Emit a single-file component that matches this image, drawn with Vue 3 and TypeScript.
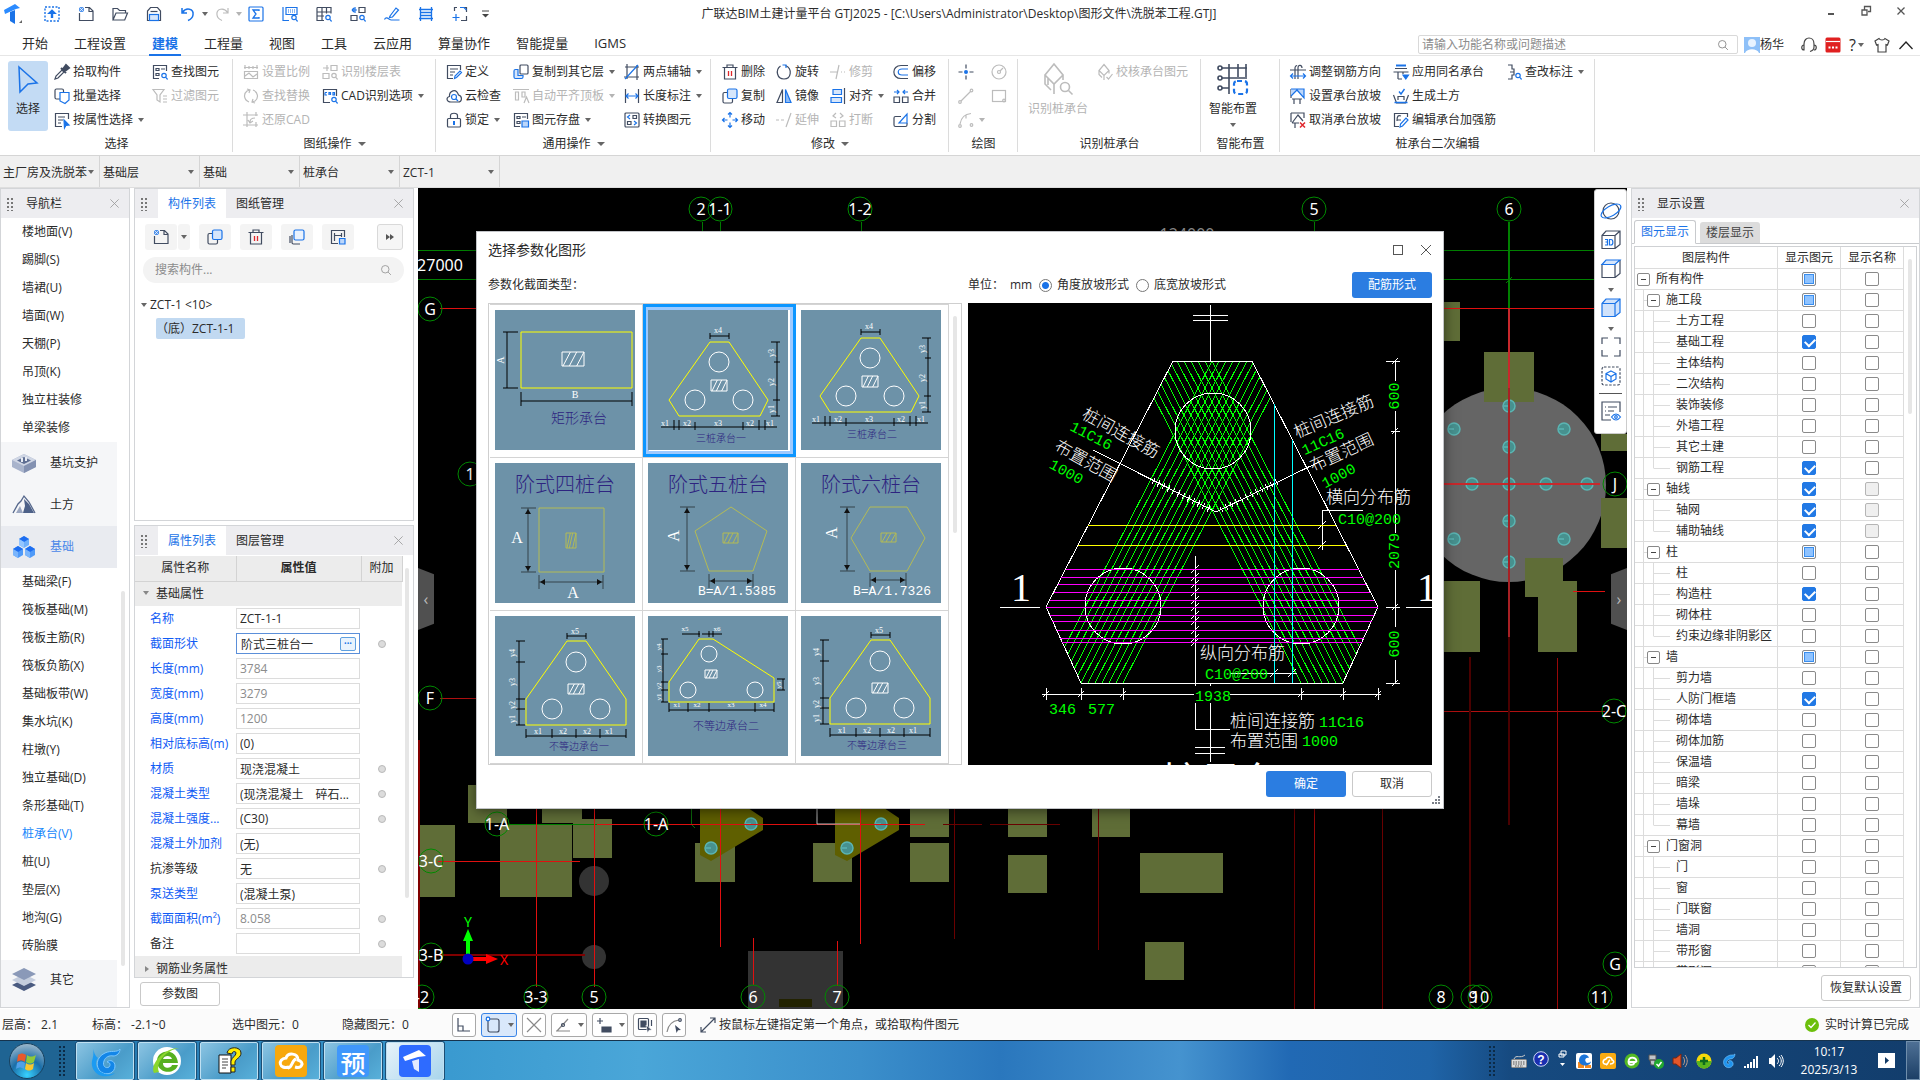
<script setup lang="ts">
import { ref } from 'vue'

const B = '#1a73e8'
const R = '#e0272c'

/* ---------- icon glyphs, 16 x 16 ---------- */
const lens = `<g stroke="${B}"><circle cx="12" cy="11.5" r="2.2"/><path d="M13.6 13.2l2 2.3"/></g>`
const grayLens = `<circle cx="12" cy="11.5" r="2.2"/><path d="M13.6 13.2l2 2.3"/>`
const icons: Record<string, string> = {
  target: `<g stroke="${B}"><rect x="1" y="1" width="14" height="14" stroke-dasharray="2 1.5" stroke-width="1.4"/><path d="M8 12V7" stroke-width="2.4"/><path d="M4.5 7.5L8 4l3.5 3.5z" fill="${B}"/></g>`,
  file: `<path d="M7 1.5h4.500l3.500 3.500v9.500H1.500V7M11 1.500V5.500h4"/><path d="M1 1h5v5H1z" fill="${B}" stroke="none" opacity=".75"/><path d="M1 1l5 5M6 1L1 6" stroke="#fff" stroke-width=".7"/>`,
  folder: `<path d="M1 14V2.500h4.500l2 2h6V7M1 14l3-7h11.500l-2.800 7z"/>`,
  save: `<path d="M1.500 14.500V5l3-3.500h7l3 3.500v9.500z"/><path d="M4.500 5.500h7"/><rect x="3.500" y="8.500" width="9" height="6" stroke="${B}" fill="#d6e6fb"/>`,
  undo: `<g stroke="${B}" stroke-width="1.500"><path d="M2 2v5h5M2.500 6.500C6 1 14 2.500 13 9c-.4 3-2.500 4.500-5 5.500"/></g>`,
  redo: `<path d="M14 2v5H9M13.500 6.500C10 1 2 2.500 3 9c.4 3 2.500 4.500 5 5.500"/>`,
  sum: `<g stroke="${B}"><rect x="1" y="1" width="14" height="14" rx="1"/><path d="M11 5V4H5l3 4-3 4h6v-1" stroke-width="1.300"/></g>`,
  sheetLens: `<g stroke="${B}"><path d="M1 1v13.500h6M4 1.500h11v7H4z"/><path d="M6 4h8M6 6h8" stroke-dasharray="1 1"/></g>${lens}`,
  gridLens: `<path d="M1 1.500h14v6M1 1.500v13h7M1 6h14M1 10h7M6 1.500v13M10.500 1.500v6"/>${lens}`,
  gridArrow: `<path d="M9 1.500h6v5H9zM1 9.500h6v5H1z"/><g stroke="${B}"><path d="M5 1v6M2 4h5M2 4l2-2M2 4l2 2"/></g>${lens}`,
  brush: `<g stroke="${B}"><path d="M6 10l6-8 2.500 2-6 7-3 .5z"/><path d="M0.500 13.500c2-4 5 1 7 .5h8"/></g>`,
  bars: `<g stroke="${B}" stroke-width="1.300"><path d="M2.500 1v14M13.500 1v14M1 3.500h14M2.500 6.500h11M2.500 9.500h11M1 12.500h14"/></g>`,
  scan: `<path d="M5 1.500H2.500V5M10 1.500h4.500V6M14.500 10v4.500H9"/><g stroke="${B}"><path d="M4 8v7M0.500 11.500h7M8 1.500h4l2.500 2.500"/></g>`,
  pick: `<path d="M1 15l1-3 6-6 2 2-6 6z"/><path d="M7 4l5 5M9 5l3-4 3 3-4 3z" fill="#414c61" stroke-width="2"/>`,
  batch: `<rect x="1" y="1" width="8.500" height="10" rx="1.500"/><path d="M6 4.500h9V12l-4 3.500L6 13z" stroke="${B}" fill="#fff"/>`,
  byAttr: `<path d="M14.500 7V1.500h-13v13H8M4 5h7M4 8h5M4 11h3"/><path d="M10 8l5 5-3 .3L10.500 16z" fill="${B}" stroke="${B}"/>`,
  find: `<path d="M14.500 7V1.500h-13v13H7M4 4.500h3v2H4zM4 9.500h3v2H4zM9 5h4"/>${lens}`,
  funnel: `<path d="M1 1.500h11L8 7v7l-3-2V7zM11 8h4M11 11h4M11 14h4"/>`,
  scale: `<path d="M1 3.500h14M2 1v4M14 1v4M6 2v3M10 2v3M1.500 7.500h13v7h-13zM2 12l4-3 4 4 4-3"/>`,
  layers: `<path d="M5 1v6M1 4h6M9 1.500h6v5H9zM1 9.500h6v5H1z"/>${grayLens}`,
  swap: `<path d="M6 14C1 12 0 6 4 3l3-1M4 1l3 1-1 3M10 2c5 2 6 8 2 11l-3 1M12 15l-3-1 1-3"/>`,
  restore: `<path d="M4 0v15M0 3h15M0 13h15M13 0v4M13 10v5M12 6c-3 0-5 1-5 4M5 8l2 3 3-2"/>`,
  cad: `<path d="M14.500 8V1.500h-13v13H8"/><path d="M3 4.500h2M3 4.500v2.500h2M7 7V4.500h1.500V7M7 6h1.500M11 4.500v2.500h1.500V4.500z" stroke="${B}"/>${lens}`,
  define: `<path d="M14.500 6V1.500h-13v13H7M4 5h8M4 8h5M4 11h3"/><path d="M8.500 14.500l.5-2.500 5-5 1.500 1.500-5 5z" stroke="${B}"/>`,
  cloud: `<path d="M5 14C0 14 0 9 3.500 8.500 3 3 10-0.500 12.500 7c4 1 4 7-.5 7z"/><g stroke="${B}"><circle cx="8" cy="9" r="2.500"/><path d="M10 11l2 2"/></g>`,
  lock: `<rect x="1.500" y="6.500" width="13" height="8.500" rx="1"/><path d="M4.500 6V3.500c0-3 7-3 7 0V6"/><path d="M8 9v4" stroke="${B}" stroke-width="2"/>`,
  copyTo: `<rect x="7" y="1" width="8" height="9" rx="1"/><path d="M5 5.500H2.500c-1 0-1.500.5-1.500 1.500V13c0 1 .5 1.500 1.500 1.500h6c1 0 1.500-.5 1.500-1.500v-1.500H5z" stroke="${B}" fill="#d6e6fb"/>`,
  align2: `<path d="M0 1.500h16M2.500 4v8h3V4zM9 4v5h3V4zM11 15l2.500-6L16 15"/>`,
  disk: `<path d="M14.500 7V1.500h-13v13H7M4 4.500h3v2H4zM4 9.500h3v2H4zM9 5h4"/><path d="M9 9h6.500v6H9z" fill="#bcd6fa" stroke="${B}"/>`,
  twoPt: `<path d="M3 0v15M0 13h15M13 1v15M1 3h14"/><path d="M1 15L14 1" stroke="${B}"/>`,
  length: `<path d="M1.500 1v14M14.500 1v14"/><path d="M2 8h12M4.500 5.500L2 8l2.500 2.500M11.500 5.500L14 8l-2.500 2.500" stroke="${B}"/>`,
  convert: `<rect x="1" y="1" width="14" height="14" rx="1"/><path d="M9 3.500h3.500v3H9zM3.500 9.500H7v3H3.500z"/><path d="M6 3L3.500 5 6 7M10 13l2.500-2L10 9" stroke="${B}"/>`,
  del: `<path d="M0.500 3.500h15M5 3V1h6v2M2.500 4v11h11V4"/><path d="M6.500 7v5M9.500 7v5" stroke="${R}" stroke-width="1.300"/>`,
  copy: `<path d="M6 4.500H2.500c-1 0-1.500.5-1.500 1.500v7.500c0 1 .5 1.500 1.500 1.500h6.500c1 0 1.500-.5 1.500-1.500V11"/><rect x="5.500" y="1" width="9.500" height="9.500" rx="1.500" stroke="${B}" fill="#d6e6fb"/>`,
  move: `<g stroke="${B}"><path d="M8 0.500v5M8 10.500v5M0.500 8h5M10.500 8h5M6 2.500l2-2 2 2M6 13.500l2 2 2-2M2.500 6l-2 2 2 2M13.500 6l2 2-2 2"/></g>`,
  rotate: `<path d="M4.500 2C-1 6 1 15 8 15S17 5 9.500 1.500"/><path d="M10 4V1H6.500" stroke="${B}"/>`,
  mirror: `<path d="M6.500 1.500v13H1z"/><path d="M9.500 1.500v13H15z" fill="#8fbcf5" stroke="${B}"/>`,
  extend: `<path d="M0 8h3M5 8h3M15 1l-5 14"/>`,
  trim: `<path d="M0 8h7M9 1L6 15M11 8h1M14 8h1"/>`,
  align: `<path d="M14.500 0v16"/><path d="M3 1.500h8.500v5H3zM1 9.500h10.500v5H1z" stroke="${B}" fill="#d6e6fb"/>`,
  breakUp: `<path d="M1 9h5.500v5.500H1zM9.500 9H15v5.500H9.500zM6 1L3 4l3 2M10 1l3 3-3 2"/>`,
  offset: `<path d="M15 1.500H8C-1.500 1.500-1.500 14.500 8 14.500h7"/><path d="M15 5H9c-5 0-5 6 0 6h6" stroke="${B}"/>`,
  merge: `<path d="M1 9h5.500v5.500H1zM9.500 9H15v5.500H9.500z"/><path d="M1 4h5M4 2l2 2-2 2M15 4h-5M12 2l-2 2 2 2" stroke="${B}"/>`,
  split: `<path d="M8 4.500H2.500C1.500 4.500 1 5 1 6v7c0 1 .5 1.500 1.500 1.500h10c1 0 1.500-.5 1.500-1.500v-2"/><path d="M6 11l8-9v9z" stroke="${B}"/>`,
  point: `<path d="M8 0.500v4M8 11.500v4M0.500 8h4M11.500 8h4"/><circle cx="8" cy="8" r="2" fill="${B}" stroke="none"/>`,
  circle: `<circle cx="8" cy="8" r="7"/><circle cx="8" cy="8" r="1.500"/><path d="M9 7l3-3"/>`,
  line: `<circle cx="13.500" cy="2.500" r="1.300"/><circle cx="2" cy="14" r="1.300"/><path d="M3 13l9.500-9.500"/>`,
  rect: `<rect x="1.500" y="2.500" width="13" height="11"/><circle cx="13" cy="12.500" r="1.300"/>`,
  arc: `<circle cx="2" cy="14" r="1.300"/><circle cx="13.500" cy="13" r="1.300"/><path d="M2 12C3 6 7 2 13 1.500M8 3.500v3"/>`,
  check: `<path d="M7 0.500l5 6-5 5-5-5zM2 6.500v4l3 3M7 11.500V16M9.500 13l2 2 4-5M12 6.500v3"/>`,
  cap: `<path d="M12 1l9 11-9 9-9-9zM3 12v9l6 6M12 21v10M3 12V20M21 12v5M12 31M6 15v7" /><circle cx="23" cy="24" r="4.500"/><path d="M26.500 27.500l4 4"/>`,
  smart: `<path d="M4 5h26M4 15h26M4 25h8M12 1v30M21 1v13M29 1v13" stroke-width="1.600"/><g fill="#fff"><circle cx="3" cy="5" r="2"/><circle cx="3" cy="15" r="2"/><circle cx="3" cy="25" r="2"/></g><rect x="17" y="18" width="13" height="13" rx="3" stroke="${B}" stroke-dasharray="5 3" stroke-width="2.200"/>`,
  dir: `<path d="M0 6h16M8 15V4c0-4 4-3 4 0M5 15V4c0-1 1-3 2-2"/><path d="M1 12h14M3 9.500L.5 12 3 14.500M13 9.500l2.500 2.500-2.500 2.500" stroke="${B}"/>`,
  slope: `<path d="M2 11h10M4 11v5M10 11v5M1 1v9"/><path d="M1 1h13v9L7 2 1 8" stroke="${B}" fill="#bcd6fa"/>`,
  unslope: `<path d="M1 1h13v5M2 11L8 3l5 6M2 11h7M5 11v5M1 1v9"/><path d="M10 10.500l5 5M15 10.500l-5 5" stroke="${R}" stroke-width="1.500"/>`,
  apply: `<path d="M2 4.500h12M0.500 8h15M5 8v7M10 8v2M5 15h4"/><path d="M3 1.500h10" stroke="${B}" stroke-width="2"/><path d="M10 11h5.500l-2.700 4z" fill="${B}" stroke="${B}"/>`,
  earth: `<path d="M0.500 7l3 8h9l3-8M5 12V8.500h6V12"/><path d="M1.500 14.500h13M6 3.500L8 6l3.500-5" stroke="${B}" stroke-width="1.400"/>`,
  editBar: `<path d="M14.500 5V1.500H1.500v13H6M8 4c-3-1-4 0-4 5M4 8l4 0"/><path d="M7 15l.5-3L13 6l2 2-5.500 6z" stroke="${B}"/>`,
  note: `<path d="M2 1h4v4h2v6H6v4H2M4 8h4"/>${lens}`,
  multi: `<path d="M3 6v7.500c0 .8.500 1.500 1.500 1.500H11M1 7v7"/><rect x="5" y="1" width="10" height="10" rx="1.500" stroke="${B}" fill="#eaf2fd"/>`,
  sheetSave: `<path d="M14.500 8V1.500h-13v13H8M4.500 4v8M11.500 4v4M4.500 6.500h7"/><path d="M9.500 9.500H15V15H9.500z" fill="#bcd6fa" stroke="${B}"/>`,
  search: `<circle cx="7" cy="7" r="5"/><path d="M10.800 10.800L14.500 14.500"/>`,
  x: `<path d="M2 2l12 12M14 2L2 14"/>`,
}

interface Tool { i: string; t?: string; a?: boolean; d?: boolean }
interface Col { w: number; items: Tool[] }
interface Group { w: number; pad: number; label: string; la?: boolean; big?: { i: string; t: string; w: number; on?: boolean; d?: boolean; a?: boolean }; cols: Col[] }
const groups: Group[] = [
  { w: 233, pad: 8, label: '选择', big: { i: 'cursor', t: '选择', w: 46, on: true }, cols: [
    { w: 98, items: [{ i: 'pick', t: '拾取构件' }, { i: 'batch', t: '批量选择' }, { i: 'byAttr', t: '按属性选择', a: true }] },
    { w: 80, items: [{ i: 'find', t: '查找图元' }, { i: 'funnel', t: '过滤图元', d: true }] }] },
  { w: 203, pad: 10, label: '图纸操作', la: true, cols: [
    { w: 79, items: [{ i: 'scale', t: '设置比例', d: true }, { i: 'swap', t: '查找替换', d: true }, { i: 'restore', t: '还原CAD', d: true }] },
    { w: 110, items: [{ i: 'layers', t: '识别楼层表', d: true }, { i: 'cad', t: 'CAD识别选项', a: true }] }] },
  { w: 275, pad: 10, label: '通用操作', la: true, cols: [
    { w: 67, items: [{ i: 'define', t: '定义' }, { i: 'cloud', t: '云检查' }, { i: 'lock', t: '锁定', a: true }] },
    { w: 111, items: [{ i: 'copyTo', t: '复制到其它层', a: true }, { i: 'align2', t: '自动平齐顶板', a: true, d: true }, { i: 'disk', t: '图元存盘', a: true }] },
    { w: 84, items: [{ i: 'twoPt', t: '两点辅轴', a: true }, { i: 'length', t: '长度标注', a: true }, { i: 'convert', t: '转换图元' }] }] },
  { w: 238, pad: 11, label: '修改', la: true, cols: [
    { w: 54, items: [{ i: 'del', t: '删除' }, { i: 'copy', t: '复制' }, { i: 'move', t: '移动' }] },
    { w: 54, items: [{ i: 'rotate', t: '旋转' }, { i: 'mirror', t: '镜像' }, { i: 'extend', t: '延伸', d: true }] },
    { w: 63, items: [{ i: 'trim', t: '修剪', d: true }, { i: 'align', t: '对齐', a: true }, { i: 'breakUp', t: '打断', d: true }] },
    { w: 50, items: [{ i: 'offset', t: '偏移' }, { i: 'merge', t: '合并' }, { i: 'split', t: '分割' }] }] },
  { w: 69, pad: 9, label: '绘图', cols: [
    { w: 33, items: [{ i: 'point' }, { i: 'line', d: true }, { i: 'arc', a: true, d: true }] },
    { w: 20, items: [{ i: 'circle', d: true }, { i: 'rect', d: true }] }] },
  { w: 183, pad: 10, label: '识别桩承台', big: { i: 'cap', t: '识别桩承台', w: 69, d: true }, cols: [
    { w: 95, items: [{ i: 'check', t: '校核承台图元', d: true }] }] },
  { w: 79, pad: 8, label: '智能布置', big: { i: 'smart', t: '智能布置', w: 48, a: true }, cols: [] },
  { w: 315, pad: 10, label: '桩承台二次编辑', cols: [
    { w: 103, items: [{ i: 'dir', t: '调整钢筋方向' }, { i: 'slope', t: '设置承台放坡' }, { i: 'unslope', t: '取消承台放坡' }] },
    { w: 113, items: [{ i: 'apply', t: '应用同名承台' }, { i: 'earth', t: '生成土方' }, { i: 'editBar', t: '编辑承台加强筋' }] },
    { w: 80, items: [{ i: 'note', t: '查改标注', a: true }] }] },
]

const quick = ['target', 'file', 'folder', 'save', 'undo', 'redo', 'sum', 'sheetLens', 'gridLens', 'gridArrow', 'brush', 'bars', 'scan']
const tabs = ['开始', '工程设置', '建模', '工程量', '视图', '工具', '云应用', '算量协作', '智能提量', 'IGMS']
const crumbs = ['主厂房及洗脱苯', '基础层', '基础', '桩承台', 'ZCT-1']

const navTop = ['楼地面(V)', '踢脚(S)', '墙裙(U)', '墙面(W)', '天棚(P)', '吊顶(K)', '独立柱装修', '单梁装修']
const navBase = ['基础梁(F)', '筏板基础(M)', '筏板主筋(R)', '筏板负筋(X)', '基础板带(W)', '集水坑(K)', '柱墩(Y)', '独立基础(D)', '条形基础(T)', '桩承台(V)', '桩(U)', '垫层(X)', '地沟(G)', '砖胎膜']
const pit = `<path d="M12 3l12 6v7l-12 6L0 16V9z" fill="#a9b4cc"/><path d="M12 3l12 6-12 6L0 9z" fill="#cfd6e4"/><path d="M12 6l7 3.500-7 3.500-7-3.500z" fill="#5f6f93"/><path d="M9 7h2v4H9zM13 6h2v4h-2z" fill="#e8ecf4"/><path d="M12 15l12-6v7l-12 6z" fill="#8391b1"/>`
const hill = `<path d="M1 20L6 11l3-3 3-5 5 6 6 11" fill="none" stroke="#55678c" stroke-width="1.300"/><path d="M12 6l5 5 5 9H11l2-7z" fill="#4d6188"/><path d="M4 20l4-7 3 7z" fill="#9aa6c0"/>`
const cube = (x: number, y: number, side: string, front: string) =>
  `<g transform="translate(${x} ${y})"><path d="M12 1l5 3v6l-5 3-5-3V4z" fill="${side}"/><path d="M12 1l5 3-5 3-5-3z" fill="#1d6df0"/><path d="M7 4l5 3v6l-5-3z" fill="${front}"/></g>`
const cubes = cube(0, 0, '#6fb0fb', '#93c5ff') + cube(-6, 10, '#4f9af8', '#7ab5fc') + cube(6, 10, '#4f9af8', '#7ab5fc')
const stack = `<path d="M12 11l12 6-12 6-12-6z" fill="#4a5b80"/><path d="M12 6l12 6-12 6-12-6z" fill="#c4cddd"/><path d="M12 0l12 6-12 6L0 6z" fill="#8a99b8"/>`
const cats = [{ t: '基坑支护', g: pit, on: false }, { t: '土方', g: hill, on: false }, { t: '基础', g: cubes, on: true }]

interface Prop { n: string; v: string; dot?: boolean; k?: boolean; ro?: boolean; edit?: boolean }
const props: Prop[] = [
  { n: '名称', v: 'ZCT-1-1' },
  { n: '截面形状', v: '阶式三桩台一', dot: true, edit: true },
  { n: '长度(mm)', v: '3784', ro: true },
  { n: '宽度(mm)', v: '3279', ro: true },
  { n: '高度(mm)', v: '1200', ro: true },
  { n: '相对底标高(m)', v: '(0)' },
  { n: '材质', v: '现浇混凝土', dot: true },
  { n: '混凝土类型', v: '(现浇混凝土　碎石...', dot: true },
  { n: '混凝土强度...', v: '(C30)', dot: true },
  { n: '混凝土外加剂', v: '(无)' },
  { n: '抗渗等级', v: '无', dot: true, k: true },
  { n: '泵送类型', v: '(混凝土泵)' },
  { n: '截面面积(m²)', v: '8.058', dot: true, ro: true },
  { n: '备注', v: '', dot: true, k: true },
]

/* level, name, state of "显示图元" (0 off, 1 on, 2 mixed), names disabled, last child */
type Row = [number, string, number, boolean?, boolean?]
const rows: Row[] = [
  [0, '所有构件', 2], [1, '施工段', 2], [2, '土方工程', 0], [2, '基础工程', 1], [2, '主体结构', 0], [2, '二次结构', 0],
  [2, '装饰装修', 0], [2, '外墙工程', 0], [2, '其它土建', 0], [2, '钢筋工程', 1, false, true],
  [1, '轴线', 1, true], [2, '轴网', 1, true], [2, '辅助轴线', 1, true, true],
  [1, '柱', 2], [2, '柱', 0], [2, '构造柱', 1], [2, '砌体柱', 0], [2, '约束边缘非阴影区', 0, false, true],
  [1, '墙', 2], [2, '剪力墙', 0], [2, '人防门框墙', 1], [2, '砌体墙', 0], [2, '砌体加筋', 0], [2, '保温墙', 0], [2, '暗梁', 0], [2, '墙垛', 0], [2, '幕墙', 0, false, true],
  [1, '门窗洞', 0], [2, '门', 0], [2, '窗', 0], [2, '门联窗', 0], [2, '墙洞', 0], [2, '带形窗', 0], [2, '带形洞', 0],
]

/* ---------- section thumbnails, 140 x 140 ---------- */
const L = (d: string, c = '#000', w = 1) => `<path d="${d}" fill="none" stroke="${c}" stroke-width="${w}"/>`
const C = (x: number, y: number, r: number) => `<circle cx="${x}" cy="${y}" r="${r}" fill="none" stroke="#fff"/>`
const hatch = (x: number, y: number, w: number, h: number, c = '#fff') =>
  L(`M${x} ${y}h${w}v${h}h${-w}z M${x + 1} ${y + h}l${w / 3} ${-h} M${x + w / 3} ${y + h}l${w / 3} ${-h} M${x + (2 * w) / 3} ${y + h}l${w / 3} ${-h}`, c)
const T = (s: string, x: number, y: number, size = 8, rot = 0, fam = 'Liberation Serif', c = '#fff') =>
  `<text x="${x}" y="${y}" font-size="${size}" fill="${c}" text-anchor="middle" dominant-baseline="central" font-family="'${fam}','Noto Sans CJK SC',serif"${rot ? ` transform="rotate(${rot} ${x} ${y})"` : ''}>${s}</text>`
const purple = '#2e2480'
const olive = '#b4bb55'
const gray = '#35434b'
const title = (s: string, x: number, y: number, size: number) => `<g font-weight="300">${T(s, x, y, size, 0, 'Liberation Serif', purple)}</g>`
const tri = (dy: number) =>
  L('M62 32H81L120 90L112 106H31L21 90Z', '#ff0') + C(71, 52, 10) + C(47, 90, 10) + C(95, 90, 10) + hatch(63, 70, 16, 11) +
  L(`M62 26H81M62 23v6M81 23v6M129 32V106M123 32h9M126 52h6M125 90h7M123 106h9M13 ${117 + dy}H129M26 ${110 + dy}v10M31 ${110 + dy}v10M47 ${112 + dy}v8M95 ${112 + dy}v8M111 ${110 + dy}v10M117 ${110 + dy}v10`) +
  T('x4', 70, 20) + T('y3', 123, 43, 8, -90) + T('y2', 123, 72, 8, -90) + T('y1', 123, 99, 8, -90) +
  T('x1', 17, 113 + dy) + T('x2', 39, 113 + dy) + T('x3', 70, 113 + dy) + T('x2', 102, 113 + dy) + T('x1', 122, 113 + dy)
const uneven =
  L('M72 25H91L131 83V109H31V83Z', '#ff0') + C(81, 46, 10) + C(57, 93, 10) + C(105, 93, 10) + hatch(73, 68, 16, 10) +
  L('M72 20H91M72 17v6M91 17v6M24 25V109M21 25h9M21 46h9M21 83h9M21 93h9M21 109h9M31 120H131M31 113v9M57 113v9M81 113v9M105 113v9M131 113v9') +
  T('x5', 80, 15) + T('y4', 17, 37, 8, -90) + T('y3', 17, 66, 8, -90) + T('y2', 17, 89, 8, -90) + T('y1', 17, 103, 8, -90) +
  T('x1', 43, 115) + T('x2', 68, 115) + T('x2', 92, 115) + T('x1', 114, 115)
const vArrow = (x: number, y1: number, y2: number) =>
  L(`M${x} ${y1}V${y2}M${x - 7} ${y1}h15M${x - 7} ${y2}h15`, gray) + `<path d="M${x} ${y1 + 1}l3 5h-6zM${x} ${y2 - 1}l3-5h-6z" fill="#111"/>`
const hArrow = (x1: number, x2: number, y: number) =>
  L(`M${x1} ${y}H${x2}M${x1} ${y - 7}v14M${x2} ${y - 7}v14`, gray) + `<path d="M${x1 + 1} ${y}l5-3v6zM${x2 - 1} ${y}l-5-3v6z" fill="#111"/>`
const thumbs = [
  L('M26 22H137V78H26Z', '#ff0') + hatch(67, 42, 22, 14) + L('M12 22V78M8 22h15M8 78h15M26 91H137M26 82v14M137 82v14') +
    T('A', 5, 50, 10, -90) + T('B', 80, 84, 10) + title('矩形承台', 84, 108, 14),
  tri(0) + title('三桩承台一', 73, 128, 10),
  `<g transform="translate(-2 -4)">${tri(0)}</g>` + title('三桩承台二', 71, 124, 10),
  title('阶式四桩台', 70, 22, 20) + L('M44 45H109V109H44Z', olive) + vArrow(33, 45, 109) + hArrow(44, 108, 119) + hatch(71, 70, 10, 15, olive) + T('A', 22, 74, 16) + T('A', 78, 129, 16),
  title('阶式五桩台', 70, 22, 20) + L('M83 44L119 68L105 108H61L47 68Z', olive) + vArrow(39, 44, 108) + hArrow(61, 105, 118) + hatch(75, 70, 15, 10, olive) + T('A', 25, 73, 16, -90) + T('B=A/1.5385', 89, 128, 13, 0, 'Liberation Mono'),
  title('阶式六桩台', 70, 22, 20) + L('M69 44H106L124 75L106 108H69L50 75Z', olive) + vArrow(46, 44, 108) + hArrow(69, 105, 117) + hatch(80, 70, 15, 9, olive) + T('A', 30, 70, 16, -90) + T('B=A/1.7326', 91, 128, 13, 0, 'Liberation Mono'),
  uneven + title('不等边承台一', 84, 130, 10),
  L('M51 23H65L126 62V86H21V66Z', '#ff0') + C(61, 38, 8) + C(40, 74, 8) + C(107, 74, 8) + hatch(57, 54, 12, 8) +
    L('M34 18H52M54 18H74M51 15v6M61 15v6M65 15v6M15 23V86M13 23h7M13 38h7M13 66h7M13 74h7M13 86h7M135 63V74M129 63h8M129 74h8M21 94H126M21 87v9M40 87v9M61 87v9M107 87v9M126 87v9') +
    T('x5', 37, 13, 7) + T('x6', 69, 13, 7) + T('y4', 11, 31, 7, -90) + T('y3', 11, 53, 7, -90) + T('y2', 11, 70, 7, -90) + T('y1', 11, 81, 7, -90) + T('y5', 131, 69, 7, -90) +
    T('x1', 29, 89, 7) + T('x2', 49, 89, 7) + T('x3', 83, 89, 7) + T('x4', 115, 89, 7) + title('不等边承台二', 78, 110, 11),
  `<g transform="translate(-2 -1)">${uneven}</g>` + title('不等边承台三', 76, 129, 10),
]
const chosen = ref(1)
const slopeMode = ref('angle')

/* ---------- reinforcement preview ---------- */
const barOffsets = Array.from({ length: 12 }, (_, i) => 244 + i * 7)
const magentaY = [266, 274, 281, 289, 297, 304, 312, 318, 327, 335, 339]
const leftX = (y: number) => (y < 304 ? 78 + ((304 - y) * 127) / 246 : 78 + ((y - 304) * 35) / 76)
const rightX = (y: number) => (y < 304 ? 410 - ((304 - y) * 126) / 246 : 410 - ((y - 304) * 35) / 76)
const ticks = Array.from({ length: 12 }, (_, i) => i)

/* ---------- model view ---------- */
const slabs = [
  [418, 825, 37, 72], [468, 785, 39, 38], [542, 800, 40, 23], [573, 819, 39, 39], [500, 825, 72, 72], [695, 843, 40, 39], [813, 843, 39, 39],
  [910, 800, 39, 37], [910, 843, 39, 39], [1008, 800, 39, 37], [1008, 855, 39, 38], [1092, 800, 38, 37], [1140, 853, 83, 40], [1145, 942, 39, 38],
  [1440, 302, 20, 39], [1601, 434, 26, 17], [1601, 498, 26, 50], [1440, 581, 40, 71],
]
const piles = [[1509, 406], [1454, 429], [1564, 429], [1509, 447], [1472, 484], [1509, 484], [1546, 484], [1587, 484], [1509, 521], [1454, 539], [1564, 539], [1509, 562], [751, 824], [711, 848], [881, 824], [847, 848]]
type Axis = [string, number, number]
const axes: Axis[] = [
  ['2', 701, 209], ['1-1', 720, 209], ['1-2', 860, 209], ['5', 1314, 209], ['6', 1509, 209], ['G', 430, 309], ['F', 430, 698], ['1', 470, 474],
  ['J', 1615, 484], ['2-C', 1614, 711], ['G', 1615, 964], ['8', 1441, 997], ['9', 1473, 997], ['10', 1480, 997], ['11', 1600, 997],
  ['1-A', 497, 824], ['1-A', 656, 824], ['3-C', 431, 861], ['3-B', 431, 955], ['-2', 422, 997], ['3-3', 536, 997], ['5', 594, 997], ['6', 753, 997], ['7', 837, 997],
]

const snap = [
  { w: 24, g: `<path d="M2 1v13h12M2 9h5v5"/>` },
  { w: 36, g: `<rect x="3" y="2" width="11" height="13" rx="2"/><circle cx="3" cy="2" r="1.800" stroke="${B}" fill="#fff"/>`, on: true, a: true },
  { w: 24, g: `<path d="M1 1l14 14M15 1L1 15" stroke="#888"/>` },
  { w: 36, g: `<path d="M1 14h14M2 14L13 2" stroke="#888"/><circle cx="8" cy="8" r="1.500"/>`, a: true },
  { w: 36, g: `<path d="M4 1v6M1 4h6"/><path d="M6 10h9v5H6z" fill="#414c61"/>`, a: true },
  { w: 24, g: `<rect x="1.500" y="1.500" width="10" height="11" rx="1"/><path d="M4 4h5v6H4z" fill="#414c61"/><path d="M14.500 3v6"/><path d="M9 8l6 5-3 .3L10.500 16z" fill="#414c61" stroke="#fff" stroke-width=".6"/>` },
  { w: 24, g: `<path d="M1 15C2 8 6 4 13 3" stroke="#888"/><circle cx="14" cy="3" r="1.300"/><path d="M9 8l6 5-3 .3L10.500 16z" fill="#414c61" stroke="none"/>` },
]
const viewTools = [
  { g: `<circle cx="10" cy="10" r="8"/><ellipse cx="10" cy="10" rx="11" ry="5" transform="rotate(-30 10 10)" stroke="${B}"/>` },
  { g: `<path d="M1 5.500h13v13H1zM1 5.500l4-4.500h14v13.500l-5 4M14 5.500L19 1"/><path d="M4 9.500h2.500v5.500H4M4.500 12h2M8.500 9.500v5.500h1.500c2.500 0 2.500-5.500 0-5.500z" stroke="${B}"/>` },
  { g: `<path d="M1 5.500h13v13H1zM19 1v13.500l-5 4"/><path d="M1 5.500l4-4.500h14l-5 4.500z" stroke="${B}" fill="#d6e6fb"/>`, a: true },
  { g: `<g stroke="${B}" fill="#d0e2fb"><path d="M1 5.500l4-4.500h14v13.500l-5 4H1z"/><path d="M1 5.500h13v13M14 5.500L19 1" fill="none"/></g>`, a: true },
  { g: `<path d="M1 7V1h6M13 1h6v6M19 13v6h-6M7 19H1v-6"/>` },
  { g: `<rect x="1" y="1" width="18" height="18" rx="2" stroke-dasharray="2.500 1.500"/><path d="M10 5l5 2.500v5.500l-5 3-5-3V7.500zM5 7.500l5 3 5-3M10 10.500V16" stroke="${B}"/>`, line: true },
  { g: `<path d="M19 11V1H1v18h9M4 6h1M7 6h9M4 10h1M7 10h6M4 14h5"/><path d="M10.500 16c3-4 6-4 9 0-3 4-6 4-9 0z" stroke="${B}"/><circle cx="15" cy="16" r="1.300" stroke="${B}"/>` },
]
const apps = [
  `<path d="M31 4c-3 4-9 1-15 4-9 4-10 14-4 19 6 4 14 1 14-6 0-5-5-7-8-4 3 0 4 3 2 5-3 2-7-1-5-6 1-4 6-6 9-5 4 0 7-3 7-7z" fill="#1386e8" stroke="#7cc8ff"/><path d="M4 4c1 5 0 8-1 12-1 6 2 11 7 14 5 2 12 2 16-2-5 2-10 2-14-1-6-4-6-10-3-14-3-2-4-6-5-9z" fill="#1c9bf2"/>`,
  `<circle cx="16" cy="16" r="14" fill="#fff"/><path d="M27 18H12c0 6 8 6 9 2h6c-3 10-20 9-21-3C5 5 25 1 27 18zM12 14h9c-1-4-8-4-9 0z" fill="#57b01f"/><path d="M3 28C-2 18 16 2 28 3c-12 2-24 14-20 24" fill="#8bd62e"/>`,
  `<path d="M6 10h12v18H6z" fill="#fff" stroke="#111"/><path d="M9 14h6M9 17h6M9 20h6M9 23h4" stroke="#444"/><path d="M14 8c1-7 14-7 14 0 0 5-5 5-6 9v3h-4v-4c1-4 5-5 5-8 0-2-4-2-4 1zM18 22h4v5h-4z" fill="#ffee00" stroke="#222"/>`,
  `<rect x="0" y="0" width="32" height="32" rx="4" fill="#f7a80d"/><path d="M14 22c-10 3-12-8-3-9 2-6 12-5 12 2 7 2 4 9-3 7M13 23c4 0 4-8 8-9" fill="none" stroke="#fff" stroke-width="3"/>`,
  `<rect x="0" y="0" width="32" height="32" rx="4" fill="#3f97fb"/><text x="16" y="17" font-size="25" font-weight="500" fill="#fff" text-anchor="middle" dominant-baseline="central" font-family="'Noto Sans CJK SC',sans-serif">预</text>`,
  `<rect x="0" y="0" width="32" height="32" rx="4" fill="#2e6bff"/><path d="M4 12L20 5l7 6-8 1L6 16z" fill="#fff"/><path d="M13 16l7-2v13l-5-3z" fill="#e3ebff"/>`,
]
const tray = [
  `<rect width="16" height="16" rx="2" fill="#fff"/><path d="M2 9h6v6H2zM9 12h6v3H9z" fill="#f58a1f"/><path d="M3 8c0-8 9-8 10-3-4-1-5 3-2 5 2 0 4-1 4-2 0 6-11 6-12 0z" fill="#1b74d8"/>`,
  `<rect width="16" height="16" rx="2" fill="#f9ab12"/><path d="M7 11c-5 1-5-4-1-5 1-3 6-2 6 1 3 1 2 4-2 4M6 12c2 0 2-4 4-5" fill="none" stroke="#fff" stroke-width="1.500"/>`,
  `<circle cx="8" cy="8" r="7.500" fill="#53b823"/><path d="M12.500 9h-8c0 4 5 3 6 1M4.500 8c1-5 8-4 8 1" fill="none" stroke="#fff" stroke-width="1.800"/>`,
  `<path d="M1 2h7v5H1zM2 7h5v5H3z" fill="#bfc4ca" stroke="#555"/><circle cx="11" cy="11" r="5" fill="#21a82f"/><path d="M8.500 11l2 2 3-4" stroke="#fff" fill="none" stroke-width="1.500"/>`,
  `<path d="M1 5h3l5-4v14l-5-4H1z" fill="#e2572b" stroke="#7a2410"/><path d="M11 4c2 2 2 6 0 8M13 2c3 4 3 8 0 12" stroke="#b98" fill="none"/>`,
  `<circle cx="8" cy="8" r="7.500" fill="#f5d90a"/><path d="M0.500 8a7.500 7.500 0 0 0 15 0z" fill="#58b51e"/><path d="M8 4v8M4 8h8" stroke="#0d6b1e" stroke-width="2.500"/>`,
  `<path d="M15 1c-2 2-4 0-7 2-5 2-6 8-2 11 4 2 8-1 7-4-1-3-4-3-5-1 1 0 2 2 0 2-2 0-2-4 2-5 3 0 5-2 5-5z" fill="#1f93ee" stroke="#7cc9ff" stroke-width=".6"/>`,
  `<path d="M1 13v2M4 11v4M7 9v6M10 6v9M13 3v12" stroke="#fff" stroke-width="2"/>`,
  `<path d="M1 5h2l4-4v14l-4-4H1z" fill="#fff"/><path d="M9 5c2 2 2 4 0 6M11 3c3 3 3 7 0 10M13 2c3 4 3 8 0 12" stroke="#fff" fill="none"/>`,
]
</script>

<template>
  <div class="app">
    <header class="titlebar">
      <svg class="logo" viewBox="0 0 20 20"><path d="M0 6L11 0l5 4-4 1-11 5z" fill="#2b8bff" /><path d="M6 8l5-2v14l-5-3z" fill="#1a73e8" /><path d="M15 19l3-3v3z" fill="#666" /></svg>
      <div class="quick">
        <template v-for="q in quick" :key="q">
          <button :class="{ off: q === 'redo' }" :aria-label="q"><svg class="ico" viewBox="0 0 16 16" v-html="icons[q]" /></button>
          <i v-if="q === 'undo' || q === 'redo'" class="tri" :class="{ off: q === 'redo' }" />
        </template>
        <svg class="more" viewBox="0 0 8 8"><path d="M0 1h7" stroke="#444" /><path d="M0 4h7L3.500 7.500z" fill="#444" /></svg>
      </div>
      <h1>广联达BIM土建计量平台 GTJ2025 - [C:\Users\Administrator\Desktop\图形文件\洗脱苯工程.GTJ]</h1>
      <div class="win">
        <button aria-label="最小化"><svg viewBox="0 0 10 10"><path d="M2 8h6" stroke-width="2" /></svg></button>
        <button aria-label="还原"><svg viewBox="0 0 10 10"><path d="M1 4h5v5H1zM3.500 3.500v-3h6v5H7" stroke-width="1.300" /></svg></button>
        <button aria-label="关闭"><svg viewBox="0 0 10 10"><path d="M1.500 1.500l7 7M8.500 1.500l-7 7" stroke-width="1.300" /></svg></button>
      </div>
    </header>

    <nav class="tabs">
      <button v-for="t in tabs" :key="t" :class="{ on: t === '建模' }">{{ t }}</button>
      <span class="grow" />
      <label class="ask"><input type="text" placeholder="请输入功能名称或问题描述" aria-label="功能搜索" /><svg class="ico" viewBox="0 0 16 16" v-html="icons.search" /></label>
      <svg class="avatar" viewBox="0 0 16 16"><rect width="16" height="16" fill="#8ec0f8" /><circle cx="8" cy="6" r="4" fill="#e8f3ff" /><path d="M1 16c2-5 12-5 14 0z" fill="#fff" /></svg>
      <span class="user">杨华</span>
      <svg class="hicon" viewBox="0 0 16 16"><path d="M3 9V7c0-8 10-8 10 0v3c0 3-2 4-4 4.500M3 8c-3 0-3 5 0 5zM13 8c3 0 3 5 0 5" /></svg>
      <svg class="hicon" viewBox="0 0 16 16"><rect x="0.500" y="0.500" width="15" height="15" rx="1.500" fill="#e02020" stroke="none" /><path d="M1 4.500h14" stroke="#fff" /><path d="M3.500 10.500h9" stroke="#fff" stroke-width="2" stroke-dasharray="2 1.500" /></svg>
      <span class="help">?<i class="tri" /></span>
      <svg class="hicon" viewBox="0 0 16 16"><path d="M5 1.500L1 4l1.500 4L4 7.500V15h8V7.500l1.500.5L15 4l-4-2.500c-1 2-5 2-6 0z" /></svg>
      <svg class="hicon up" viewBox="0 0 16 16"><path d="M1.500 12L8 5l6.500 7" stroke="#222" stroke-width="1.300" /></svg>
    </nav>

    <section class="ribbon">
      <div v-for="g in groups" :key="g.label" class="group" :style="{ width: g.w + 'px', paddingLeft: g.pad + 'px' }">
        <div class="tools">
          <div v-if="g.big" class="bigwrap" :style="{ width: g.big.w + 'px' }">
            <button class="big" :class="{ on: g.big.on, off: g.big.d }">
              <svg v-if="g.big.i === 'cursor'" class="arrow" viewBox="0 0 22 28"><path d="M2 2l18 16-9 1-8 8z" fill="#c3dbf4" stroke="#1a73e8" stroke-width="1.500" /></svg>
              <svg v-else viewBox="0 0 32 32" v-html="icons[g.big.i]" />
              <span>{{ g.big.t }}</span>
              <i v-if="g.big.a" class="tri" />
            </button>
          </div>
          <div v-for="(c, ci) in g.cols" :key="ci" class="col" :style="{ width: c.w + 'px' }">
            <button v-for="b in c.items" :key="b.i" :class="{ off: b.d }" :aria-label="b.t || b.i">
              <svg class="ico" viewBox="0 0 16 16" v-html="icons[b.i]" /><span v-if="b.t">{{ b.t }}</span><i v-if="b.a" class="tri" />
            </button>
          </div>
        </div>
        <div class="glabel" :style="{ marginLeft: -g.pad + 'px' }">{{ g.label }}<i v-if="g.la" class="tri lg" /></div>
      </div>
    </section>

    <div class="crumbs">
      <div v-for="c in crumbs" :key="c" class="crumb"><select :aria-label="c"><option>{{ c }}</option></select><i class="tri" /></div>
    </div>

    <main>
      <aside class="panel nav">
        <div class="phead"><i class="grip" /><span>导航栏</span><span class="grow" /><button class="close" aria-label="关闭"><svg class="ico" viewBox="0 0 16 16" v-html="icons.x" /></button></div>
        <div class="navlist">
          <a v-for="n in navTop" :key="n" href="#">{{ n }}</a>
          <a v-for="c in cats" :key="c.t" href="#" class="cat" :class="{ on: c.on }"><svg viewBox="0 0 24 24" v-html="c.g" />{{ c.t }}</a>
          <a v-for="n in navBase" :key="n" href="#" :class="{ sel: n === '桩承台(V)' }">{{ n }}</a>
          <a href="#" class="cat last"><svg viewBox="0 0 24 24" v-html="stack" />其它</a>
          <i class="bar" />
        </div>
      </aside>

      <div class="left">
        <section class="panel parts">
          <div class="phead"><i class="grip" /><button class="ptab on">构件列表</button><button class="ptab">图纸管理</button><span class="grow" /><button class="close" aria-label="关闭"><svg class="ico" viewBox="0 0 16 16" v-html="icons.x" /></button></div>
          <div class="ptools">
            <button aria-label="新建"><svg class="ico" viewBox="0 0 16 16" v-html="icons.file" /></button>
            <button class="drop" aria-label="新建选项"><i class="tri" /></button>
            <button aria-label="复制"><svg class="ico" viewBox="0 0 16 16" v-html="icons.copy" /></button>
            <button aria-label="删除"><svg class="ico" viewBox="0 0 16 16" v-html="icons.del" /></button>
            <button aria-label="层间复制"><svg class="ico" viewBox="0 0 16 16" v-html="icons.multi" /></button>
            <button aria-label="存档"><svg class="ico" viewBox="0 0 16 16" v-html="icons.sheetSave" /></button>
            <span class="grow" />
            <button class="next" aria-label="更多"><svg viewBox="0 0 8 6"><path d="M0 0l4 3-4 3zM4 0l4 3-4 3z" fill="#555" /></svg></button>
          </div>
          <label class="search"><input type="text" placeholder="搜索构件..." aria-label="搜索构件" /><svg class="ico" viewBox="0 0 16 16" v-html="icons.search" /></label>
          <div class="tree">
            <div class="root"><i class="tri" />ZCT-1 &lt;10&gt;</div>
            <div class="leaf">（底）ZCT-1-1</div>
          </div>
        </section>

        <section class="panel attrs">
          <div class="phead"><i class="grip" /><button class="ptab on">属性列表</button><button class="ptab">图层管理</button><span class="grow" /><button class="close" aria-label="关闭"><svg class="ico" viewBox="0 0 16 16" v-html="icons.x" /></button></div>
          <table>
            <thead><tr><th class="c1">属性名称</th><th class="c2">属性值</th><th class="c3">附加</th></tr></thead>
            <tbody>
              <tr class="sec"><td colspan="3"><i class="tri" />基础属性</td></tr>
              <tr v-for="(p, i) in props" :key="p.n">
                <td class="pn" :class="{ k: p.k }"><label :for="'p' + i">{{ p.n }}</label></td>
                <td class="pv"><div :class="{ edit: p.edit }"><input :id="'p' + i" type="text" :value="p.v" :class="{ ro: p.ro }" /><button v-if="p.edit" aria-label="选择">•••</button></div></td>
                <td class="pd"><i v-if="p.dot" class="dot" /></td>
              </tr>
              <tr class="sec end"><td colspan="3"><i class="tri side" />钢筋业务属性</td></tr>
            </tbody>
          </table>
          <i class="bar" />
        </section>
        <button class="plain param">参数图</button>
      </div>

      <div class="canvas">
        <svg class="model" viewBox="418 188 1209 821" preserveAspectRatio="xMinYMin slice">
          <rect x="418" y="188" width="1209" height="821" fill="#000" />
          <circle cx="1509" cy="485" r="97" fill="#656565" />
          <rect x="748" y="951" width="95" height="58" fill="#333" /><rect x="779" y="999" width="33" height="8" fill="#222200" />
          <circle cx="594" cy="881" r="15" fill="#333" /><circle cx="594" cy="957" r="12" fill="#333" />
          <g fill="#5f6d37"><rect v-for="(s, i) in slabs" :key="i" :x="s[0]" :y="s[1]" :width="s[2]" :height="s[3]" /><path d="M1484 352h50v50h-50zM1525 558h38v23h14v71h-39v-55h-13z" /></g>
          <path d="M700 800h36l27 18v12l-52 31-11-6zM835 800h37l27 18v12l-52 31-12-6z" fill="#5f5f00" />
          <g fill="#47918f" stroke="#5ab5b3" stroke-width="1.500"><g v-for="(p, i) in piles" :key="i"><circle :cx="p[0]" :cy="p[1]" r="6" /><path :d="`M${p[0] - 5} ${p[1]}h5`" /></g></g>
          <g stroke="#008000" fill="none" shape-rendering="crispEdges">
            <path d="M418 250h1176M418 279h1176M702 222v20M720 222v20M861 222v20M1314 222v20" />
            <path d="M1509 222v86" stroke-width="2" /><path d="M1506 283l6-6M509 824h88" />
            <path d="M691 800v24l4 4" stroke="#0a6a0a" />
          </g>
          <g stroke="#e01010" fill="none" shape-rendering="crispEdges">
            <path d="M440 308h1154M597 824h328M438 861h142M720 800v147M860 800v144M753 938v47M837 941v45M536 800v187M594 800v187M1573 591h32" />
            <path d="M1440 484h160M1509 308v80" stroke="#c8282c" stroke-width="2" /><path d="M1509 388v250" stroke="#a82024" stroke-width="2" />
            <path d="M1440 711h165M440 698h36" stroke="#b01010" />
            <path d="M954 800v139M943 824h39M990 824h70M1098 800v150M1294 800v209M1382 800v209" stroke="#6a0000" />
            <path d="M1314 800v209M1557 658v351" stroke="#980808" />
            <path d="M1470 657v352M1509 637v188" stroke="#4a0000" stroke-width="2" />
            <path d="M435 955h150M419 740v269" stroke="#800000" stroke-width="2" />
          </g>
          <path d="M817 800v24M817 824h43" stroke="#bbb" fill="none" />
          <g fill="none" stroke="#008a00"><circle v-for="(a, i) in axes" :key="i" :cx="a[1]" :cy="a[2]" r="12" /></g>
          <g class="axtext" fill="#fff" text-anchor="middle"><text v-for="(a, i) in axes" :key="i" :x="a[1]" :y="a[2] + 6">{{ a[0] }}</text><text x="440" y="271">27000</text><text x="1187" y="240" fill="#999">124000</text></g>
          <path d="M468 955v-18" stroke="#0f0" stroke-width="4" /><path d="M463 941l5-12 5 12z" fill="#0f0" />
          <path d="M472 959h16" stroke="#f00" stroke-width="4" /><path d="M486 954l12 5-12 5z" fill="#f00" /><circle cx="468" cy="959" r="5.500" fill="#0000c0" />
          <text x="468" y="927" text-anchor="middle" class="ucs" fill="#0f0">Y</text><text x="504" y="965" text-anchor="middle" class="ucs" fill="#f00">X</text>
        </svg>
        <button class="handle lh" aria-label="收起左侧">‹</button>
        <button class="handle rh" aria-label="收起右侧">›</button>
        <div class="vtools">
          <template v-for="(v, i) in viewTools" :key="i">
            <button :aria-label="'视图' + (i + 1)"><svg viewBox="0 0 20 20" v-html="v.g" /></button>
            <i v-if="v.a" class="tri" /><hr v-if="v.line" />
          </template>
        </div>

        <section class="dialog" role="dialog" aria-label="选择参数化图形">
          <div class="dhead"><h2>选择参数化图形</h2>
            <button aria-label="最大化"><svg viewBox="0 0 12 12"><rect x="1.500" y="1.500" width="9" height="9" /></svg></button>
            <button aria-label="关闭"><svg viewBox="0 0 12 12"><path d="M1 1l10 10M11 1L1 11" /></svg></button>
          </div>
          <div class="dbody">
            <div class="dleft">
              <div class="drow">参数化截面类型：</div>
              <div class="list">
                <div class="cells">
                  <button v-for="(t, i) in thumbs" :key="i" :class="{ on: chosen === i }" :aria-label="'截面' + (i + 1)" @click="chosen = i"><svg viewBox="0 0 140 140" v-html="t" /></button>
                  <i v-for="n in 3" :key="'e' + n" class="stub" />
                </div>
                <i class="bar" />
              </div>
            </div>
            <div class="dright">
              <div class="drow">
                <span class="unit">单位：</span><span class="mm">mm</span>
                <label><input v-model="slopeMode" type="radio" value="angle" />角度放坡形式</label>
                <label><input v-model="slopeMode" type="radio" value="width" />底宽放坡形式</label>
                <span class="grow" /><button class="primary">配筋形式</button>
              </div>
              <svg class="preview" viewBox="0 0 464 462">
                <defs><clipPath id="capClip"><path d="M205 58H284L410 304L375 380H113L78 304Z" /></clipPath></defs>
                <rect width="464" height="462" fill="#000" />
                <g stroke="#0f0" clip-path="url(#capClip)" shape-rendering="crispEdges">
                  <path v-for="b in barOffsets" :key="b" :d="`M${b} 58L${b - 166} 380M${488 - b} 58L${654 - b} 380`" />
                </g>
                <g fill="none" stroke="#fff" shape-rendering="crispEdges">
                  <path d="M205 58H284L410 304L375 380H113L78 304Z" />
                  <circle cx="245" cy="128" r="38" /><circle cx="155" cy="303" r="38" /><circle cx="333" cy="303" r="38" />
                  <path d="M242 2V58M225 12h35M225 17h35M125 147L248 209L355 157M32 304h40M438 304h26" />
                  <path v-for="t in ticks" :key="t" :d="`M${184 + t * 5} ${181 + t * 2.500}l3-6M${252 + t * 5} ${204 - t * 2.500}l3 5`" />
                  <path d="M395 207H354V247M350 226l8-8M350 246l8-8M227 253V383M242 380v3M242 400V459M227 400V426H262M227 444h30M227 450h30" />
                  <path v-for="y in magentaY" :key="y" :d="`M223 ${y + 4}l8-8`" />
                  <path d="M427 58V78M427 108V230M427 267V324M427 357V380M418 58h14M423 128h9M418 304h14M418 380h14M424 61l6-6M424 131l6-6M424 307l6-6M424 383l6-6" />
                  <path d="M74 391H226M262 391H413M78 385v12M113 385v12M155 385v12M333 385v12M375 385v12M410 385v12M75 394l6-6M110 394l6-6M152 394l6-6M330 394l6-6M372 394l6-6M407 394l6-6" />
                  <path d="M262 370H329M302 374l8-8M320 374l8-8" />
                </g>
                <g shape-rendering="crispEdges"><path d="M120 222H368M110 242H378" stroke="#ff0" /><path v-for="y in magentaY" :key="y" :d="`M${leftX(y)} ${y}H${rightX(y)}`" stroke="#f0f" /><path d="M306 101V380M324 137V380" stroke="#0ff" /></g>
                <g class="cn"><text x="358" y="200">横向分布筋</text><text x="232" y="356">纵向分布筋</text><text x="262" y="424">桩间连接筋</text><text x="262" y="444">布置范围</text></g>
                <g class="cn mid">
                  <text transform="translate(150 135) rotate(29)">桩间连接筋</text><text transform="translate(115 163) rotate(29)">布置范围</text>
                  <text transform="translate(368 119) rotate(-23)">桩间连接筋</text><text transform="translate(376 155) rotate(-25)">布置范围</text>
                </g>
                <g class="num">
                  <text x="370" y="221">C10@200</text><text x="237" y="376">C10@200</text><text x="351" y="424">11C16</text><text x="334" y="443">1000</text><text x="81" y="411">346</text><text x="120" y="411">577</text><text x="227" y="398">1938</text>
                </g>
                <g class="num mid">
                  <text transform="translate(121 137) rotate(27)">11C16</text><text transform="translate(96 173) rotate(29)">1000</text>
                  <text transform="translate(357 143) rotate(-24)">11C16</text><text transform="translate(373 177) rotate(-28)">1000</text>
                  <text transform="translate(431 93) rotate(-90)">600</text><text transform="translate(431 248) rotate(-90)">2079</text><text transform="translate(431 341) rotate(-90)">600</text>
                </g>
                <g class="one"><text x="43" y="298">1</text><text x="449" y="298">1</text></g>
                <text class="cut" x="192" y="493">桩尺台</text>
              </svg>
            </div>
          </div>
          <div class="dfoot"><button class="primary">确定</button><button class="plain">取消</button></div>
          <svg class="resize" viewBox="0 0 9 9"><path d="M6 0h2v2H6zM3 3h2v2H3zM6 3h2v2H6zM0 6h2v2H0zM3 6h2v2H3zM6 6h2v2H6z" fill="#7a7f88" /></svg>
        </section>
      </div>

      <aside class="panel show">
        <div class="phead"><i class="grip" /><span>显示设置</span><span class="grow" /><button class="close" aria-label="关闭"><svg class="ico" viewBox="0 0 16 16" v-html="icons.x" /></button></div>
        <div class="stabs"><button class="on">图元显示</button><button>楼层显示</button></div>
        <div class="tbox">
          <table>
            <thead><tr><th class="n">图层构件</th><th class="k">显示图元</th><th class="k">显示名称</th></tr></thead>
            <tbody>
              <tr v-for="(r, i) in rows" :key="i">
                <td class="n"><div class="node">
                  <svg v-if="r[0] === 1" class="g1" viewBox="0 0 12 21"><path d="M8.500 0v21M8.500 10.500H12" /></svg>
                  <svg v-if="r[0] === 2" class="g2" viewBox="0 0 41 21"><path :d="`M8.500 0v21M18.500 0v${r[4] ? 10 : 21}M18.500 10.500H35`" /></svg>
                  <button v-if="r[0] < 2" class="fold" aria-label="折叠" :class="{ first: r[0] === 0 }" />
                  {{ r[1] }}</div></td>
                <td class="k"><input type="checkbox" :checked="r[2] === 1" :indeterminate="r[2] === 2" :aria-label="r[1] + ' 显示图元'" /></td>
                <td class="k"><input type="checkbox" :disabled="r[3]" :aria-label="r[1] + ' 显示名称'" /></td>
              </tr>
            </tbody>
          </table>
          <i class="bar" />
        </div>
        <div class="sfoot"><button class="plain">恢复默认设置</button></div>
      </aside>
    </main>

    <footer class="status">
      <span class="s1">层高： 2.1</span><span class="s2">标高： -2.1~0</span><span class="s3">选中图元：0</span><span class="s4">隐藏图元：0</span>
      <div class="snaps">
        <button v-for="(s, i) in snap" :key="i" :class="{ on: s.on }" :style="{ width: s.w + 'px' }" :aria-label="'捕捉' + (i + 1)"><svg class="ico" viewBox="0 0 16 16" v-html="s.g" /><i v-if="s.a" class="tri" /></button>
      </div>
      <svg class="ico hint" viewBox="0 0 16 16"><path d="M1 15L15 1M10 1h5v5M1 10v5h5" /></svg>
      <span>按鼠标左键指定第一个角点，或拾取构件图元</span>
      <span class="grow" />
      <svg class="done" viewBox="0 0 14 14"><circle cx="7" cy="7" r="7" fill="#6cbf0c" /><path d="M3.500 7l2.500 2.500 4.500-5" stroke="#fff" fill="none" stroke-width="1.300" /></svg>
      <span>实时计算已完成</span>
    </footer>

    <footer class="taskbar">
      <div class="startzone">
        <button class="start" aria-label="开始菜单"><svg viewBox="0 0 36 36"><defs><radialGradient id="orb" cx=".5" cy=".9" r=".9"><stop offset="0" stop-color="#37d2ff" /><stop offset=".5" stop-color="#1b6ea8" /><stop offset="1" stop-color="#9fb9cc" /></radialGradient></defs><circle cx="18" cy="18" r="17.500" fill="url(#orb)" stroke="#17415f" /><path d="M9 12c3-2 5-2 8 0l-1 7c-3-2-5-2-8 0z" fill="#e8592b" /><path d="M18 12c3 2 5 2 9 0l-2 7c-3 2-5 2-8 0z" fill="#8fc83a" /><path d="M8 20c3-2 5-2 8 0l-1 6c-3-2-5-2-8 0z" fill="#4fa0e8" /><path d="M17 20c3 2 5 2 8 0l-1 6c-3 2-5 2-8 0z" fill="#f7c62f" /></svg></button>
        <i class="tgrip" />
      </div>
      <button v-for="(a, i) in apps" :key="i" class="app-btn" :class="{ on: i === 5 }" :aria-label="'任务' + (i + 1)"><svg viewBox="0 0 32 32" v-html="a" /></button>
      <span class="grow" />
      <div class="tray">
        <i class="tgrip" />
        <svg class="kb" viewBox="0 0 16 16"><rect x="0.500" y="6.500" width="15" height="8" rx="1" fill="#ddd" stroke="#888" /><path d="M2 9h12M2 11h12M4 13h8" stroke="#555" stroke-dasharray="1.500 1" /><path d="M3 6c2-5 6 0 11-4" stroke="#ccc" fill="none" /></svg>
        <svg class="q" viewBox="0 0 16 16"><circle cx="8" cy="8" r="7.300" fill="#1b2fb0" stroke="#ccd6f5" /><text x="8" y="12.500" text-anchor="middle" font-size="12" font-weight="700" fill="#fff" font-family="Liberation Sans, sans-serif">?</text></svg>
        <svg class="tr" viewBox="0 0 9 18"><path d="M3 1h5v4H3zM1 4h5v3H1z" stroke="#fff" fill="none" /><path d="M2 13h5l-2.500 3z" fill="#fff" /></svg>
        <svg v-for="(t, i) in tray" :key="i" class="ti" viewBox="0 0 16 16" v-html="t" />
        <div class="clock"><span>10:17</span><span>2025/3/13</span></div>
        <svg class="play" viewBox="0 0 17 15"><rect width="17" height="15" fill="#fff" /><path d="M7 4l4 3.500L7 11z" fill="#123a66" /></svg>
        <i class="peek" />
      </div>
    </footer>
  </div>
</template>

<style>
html, body, #app { height: 100%; margin: 0; }
body { overflow: hidden; }
</style>

<style scoped>
.app { height: 100%; display: flex; flex-direction: column; background: #fff; color: #2b2b2b; font: 12px/16px "Open Sans", "Noto Sans CJK SC", sans-serif; white-space: nowrap; overflow: hidden; }
.app * { box-sizing: border-box; }
button, input, select { font: inherit; color: inherit; padding: 0; margin: 0; border: 0; background: none; outline: 0; }
a { color: inherit; text-decoration: none; }
table { border-collapse: collapse; table-layout: fixed; }
th { font-weight: 400; padding: 0; }
td { padding: 0; }
svg { display: block; flex: none; overflow: visible; }
.grow { flex: 1; }
.ico { width: 16px; height: 16px; fill: none; stroke: #414c61; stroke-width: 1.2; }
.off { color: #b4b4b4; }
.off .ico, .big.off svg { stroke: #bcbcbc; }
.tri { display: inline-block; flex: none; width: 0; height: 0; border: 3px solid transparent; border-top: 4px solid #666; border-bottom: 0; }
.tri.off, .off .tri { border-top-color: #b4b4b4; }
.tri.lg { border-width: 4px 4px 0; margin-left: 6px; }
.tri.side { border: 3px solid transparent; border-left: 4px solid #888; border-right: 0; }
.bar { position: absolute; width: 4px; border-radius: 2px; background: #e6e6e6; }

/* title */
.titlebar { height: 27px; display: flex; align-items: center; position: relative; flex: none; }
.logo { width: 20px; height: 20px; margin-left: 4px; }
.quick { display: flex; align-items: center; margin-left: 20px; gap: 18px; }
.quick button { width: 16px; height: 16px; }
.quick .tri { margin: 0 -12px; }
.more { width: 8px; height: 8px; margin-left: -4px; }
h1 { position: absolute; left: 0; right: 2px; text-align: center; margin: 0; font-size: 12px; line-height: 16px; font-weight: 400; pointer-events: none; }
.win { margin-left: auto; display: flex; gap: 25px; padding-right: 14px; margin-bottom: 5px; }
.win svg { width: 10px; height: 10px; fill: none; stroke: #555; }

/* tabs */
.tabs { height: 29px; display: flex; align-items: center; padding: 7px 6px 0 9px; border-bottom: 1px solid #e6e6e6; flex: none; }
.tabs > button { font-size: 13px; line-height: 20px; padding: 5px 13px 2px; position: relative; height: 29px; margin-top: -7px; }
.tabs > .on { color: #1a73e8; font-weight: 700; }
.tabs > .on::after { content: ""; position: absolute; left: 10px; right: 10px; bottom: 0; height: 2px; background: #1a73e8; }
.ask { width: 320px; height: 19px; border: 1px solid #d9d9d9; border-radius: 2px; display: flex; align-items: center; padding: 0 8px 0 3px; margin-right: 6px; }
.ask input { flex: 1; min-width: 0; }
.ask .ico { width: 12px; height: 12px; stroke: #888; }
input::placeholder { color: #8c8c8c; opacity: 1; }
.avatar { width: 16px; height: 16px; }
.user { margin-right: 17px; }
.hicon { width: 16px; height: 16px; fill: none; stroke: #444; stroke-width: 1.2; margin-right: 8px; }
.help { font-size: 16px; line-height: 16px; display: flex; align-items: center; gap: 2px; margin-right: 10px; }
.up { margin: 0; }

/* ribbon */
.ribbon { height: 100px; display: flex; flex: none; overflow: hidden; padding-top: 3px; border-bottom: 1px solid #d5d5d5; }
.group { flex: none; position: relative; }
.group::after { content: ""; position: absolute; right: 0; top: 0; height: 93px; width: 1px; background: #dcdcdc; }
.tools { display: flex; height: 74px; padding-top: 1px; }
.col button { display: flex; align-items: center; height: 24px; gap: 3px; }
.col .tri { margin-left: 2px; }
.big { display: flex; flex-direction: column; align-items: center; height: 70px; min-width: 40px; padding-top: 2px; border-radius: 3px; margin-top: 1px; }
.big svg { width: 32px; height: 32px; fill: none; stroke: #414c61; stroke-width: 1.6; margin-bottom: 6px; }
.big .arrow { width: 22px; height: 28px; margin: 2px 0 8px; }
.big.on { background: #c3dbf4; }
.big .tri { margin-top: 6px; }
.glabel { height: 22px; display: flex; align-items: center; justify-content: center; }

/* breadcrumb selectors */
.crumbs { height: 32px; display: flex; background: #f0f0f0; flex: none; border-bottom: 1px solid #dedede; }
.crumb { width: 100px; position: relative; border-right: 1px solid #d5d5d5; }
.crumb select { width: 100%; height: 31px; appearance: none; padding: 2px 0 0 3px; }
.crumb .tri { position: absolute; right: 5px; top: 14px; }

/* panels */
main { flex: 1; min-height: 0; display: flex; background: #fff; }
.panel { border: 1px solid #d3d5d8; position: relative; background: #fff; }
.phead { height: 29px; background: #ededf0; display: flex; align-items: center; padding-right: 9px; flex: none; }
.grip, .tgrip { width: 8px; height: 14px; background: radial-gradient(circle, #777 1px, transparent 1px) 0 0 / 4px 4px; }
.phead .grip { margin: 0 12px 0 5px; }
.close .ico { width: 11px; height: 11px; stroke: #999; }
.ptab { height: 29px; padding: 0 10px; }
.ptab.on { background: #fff; color: #1a73e8; }
.nav { width: 130px; flex: none; display: flex; flex-direction: column; overflow: hidden; margin-bottom: 1px; }
.navlist { position: relative; flex: 1; min-height: 0; overflow: hidden; display: flex; flex-direction: column; }
.navlist a { height: 28px; line-height: 28px; padding-left: 21px; flex: none; }
.navlist .sel { color: #1787fb; }
.navlist .cat { height: 42px; width: 116px; display: flex; align-items: center; background: #f5f6f8; padding-left: 11px; gap: 14px; line-height: 42px; }
.cat svg { width: 24px; height: 24px; }
.navlist .cat.on { background: #e9ebf0; color: #4a87e8; }
.navlist .last { flex: 1 0 42px; padding-bottom: 7px; }
.navlist .bar { right: 4px; top: 373px; height: 375px; }

.left { width: 280px; flex: none; margin-left: 4px; display: flex; flex-direction: column; align-items: flex-start; }
.parts { flex: 1; width: 280px; min-height: 0; }
.parts .grip, .attrs .grip { margin-right: 10px; }
.ptools { display: flex; padding: 6px 10px 0; }
.ptools button { width: 32px; height: 26px; background: #f4f4f4; border-radius: 3px; display: flex; align-items: center; justify-content: center; margin-right: 9px; }
.ptools button:first-child { margin-right: 1px; }
.ptools .drop { width: 12px; }
.ptools .next { width: 26px; border: 1px solid #d9d9d9; margin: 0; background: #f6f6f6; }
.next svg { width: 8px; height: 6px; }
.search { display: flex; align-items: center; height: 26px; margin: 7px 9px 0 8px; padding: 0 12px; background: #f3f3f3; border-radius: 13px; }
.search input { flex: 1; min-width: 0; }
.search .ico { width: 12px; height: 12px; stroke: #999; }
.tree { padding-top: 10px; }
.root { height: 24px; display: flex; align-items: center; gap: 3px; padding-left: 6px; }
.leaf { margin: 1px 0 0 21px; width: 89px; height: 21px; line-height: 21px; background: #c1d9f1; border-radius: 2px; }
.attrs { height: 453px; width: 280px; margin-top: 4px; overflow: hidden; flex: none; }
.attrs table { width: 267px; margin-top: 1px; }
.attrs th { height: 25px; background: #ececec; border-right: 1px solid #d3d3d3; border-bottom: 1px solid #d3d3d3; }
.attrs .c1 { width: 101px; }
.attrs .c2 { width: 125px; font-weight: 700; }
.attrs .c3 { width: 41px; }
.sec td { height: 25px; background: #ececec; }
.sec .tri { margin: 0 7px 3px 8px; border-top-color: #888; }
.sec .tri.side { border-top-color: transparent; margin: 0 7px 1px 10px; }
.pn { height: 25px; padding-left: 15px; color: #0f5bf5; }
.pn.k { color: #2b2b2b; }
.pv > div { height: 21px; border: 1px solid #dcdcdc; display: flex; align-items: center; padding: 0 3px; margin-right: 1px; }
.pv input { flex: 1; min-width: 0; height: 19px; }
.pv .ro { color: #8c8c8c; }
.pv .edit { border-color: #5b8fd9; padding-left: 4px; }
.pv button { width: 16px; height: 14px; border: 1px solid #5fa0e0; border-radius: 2px; background: #e9f3fd; color: #1a73e8; font-size: 7px; line-height: 10px; }
.pd { text-align: center; }
.dot { display: inline-block; width: 8px; height: 8px; border-radius: 50%; background: #dcdcdc; border: 1px solid #b9b9b9; }
.attrs .bar { right: 4px; top: 42px; height: 330px; }
.plain { height: 26px; width: 80px; border: 1px solid #c9c9c9; border-radius: 3px; background: #fff; }
.param { height: 24px; margin: 4px 0 3px 6px; flex: none; }

/* model canvas */
.canvas { flex: 1; min-width: 0; margin-left: 4px; position: relative; overflow: hidden; background: #000; }
.model { width: 100%; height: 100%; position: absolute; }
.axtext { font: 16px "Noto Sans", sans-serif; }
.ucs { font: 14px "Noto Sans", sans-serif; }
.handle { position: absolute; width: 16px; height: 62px; background: #505050; color: #bbb; font-size: 16px; }
.lh { left: 0; top: 380px; clip-path: polygon(0 0, 100% 10%, 100% 90%, 0 100%); }
.rh { right: 0; top: 380px; clip-path: polygon(0 10%, 100% 0, 100% 100%, 0 90%); }
.vtools { position: absolute; right: 0; top: 1px; width: 33px; height: 245px; background: #fff; border: 1px solid #ccc; border-radius: 3px; display: flex; flex-direction: column; align-items: center; padding-top: 11px; }
.vtools button { height: 20px; margin-bottom: 9px; }
.vtools svg { width: 20px; height: 20px; fill: none; stroke: #414c61; stroke-width: 1.2; }
.vtools .tri { margin: 0 0 6px; }
.vtools hr { width: 23px; height: 1px; background: #555; border: 0; margin: -2px 0 7px; flex: none; }

/* dialog */
.dialog { position: absolute; left: 58px; top: 43px; width: 968px; background: #fff; border: 1px solid #c2c4c8; padding: 0 11px 11px; box-shadow: 0 2px 12px rgba(0, 0, 0, .5); }
.dhead { height: 36px; display: flex; align-items: center; gap: 16px; }
.dhead h2 { margin: 0 auto 0 0; font-size: 14px; font-weight: 400; line-height: 20px; }
.dhead svg { width: 12px; height: 12px; fill: none; stroke: #555; }
.drow { height: 26px; display: flex; align-items: center; margin: 4px 0 5px; }
.dbody { display: flex; gap: 6px; }
.dleft { width: 474px; flex: none; }
.dright { flex: 1; min-width: 0; }
.list { height: 462px; border: 1px solid #cfcfcf; position: relative; overflow: hidden; padding: 0 0 0 1px; }
.cells { display: grid; grid-template-columns: repeat(3, 153px); width: 459px; }
.cells > * { border: solid #d4d4d4; border-width: 1px 1px 0 0; height: 153px; display: flex; align-items: flex-start; padding: 5px 0 0 5px; }
.cells > .on { border: 3px solid #0d96ff; padding: 3px 0 0 2px; box-shadow: inset 0 0 0 3px #9ecaff; }
.cells .stub { height: 12px; }
.cells svg { width: 140px; height: 140px; background: #6d92a8; overflow: hidden; }
.list .bar { right: 4px; top: 12px; height: 217px; }
.unit { width: 42px; }
.mm { width: 29px; }
.drow label { display: flex; align-items: center; gap: 5px; margin-right: 7px; }
.drow input { appearance: none; width: 13px; height: 13px; border: 1px solid #777; border-radius: 50%; background: #fff; }
.drow input:checked { background: radial-gradient(circle, #1a73e8 3px, #fff 4px); }
.primary { width: 80px; height: 26px; background: #2b7de1; color: #fff; border-radius: 3px; }
.preview { width: 464px; height: 462px; overflow: hidden; }
.cn { font: 300 17px "Noto Sans CJK SC", sans-serif; fill: #fff; }
.num { font: 15px "Liberation Mono", monospace; fill: #0f0; }
.mid { text-anchor: middle; }
.one { font: 40px "Liberation Serif", serif; fill: #fff; }
.cut { font: 40px "Noto Sans CJK SC", sans-serif; fill: #fff; }
.dfoot { display: flex; justify-content: flex-end; gap: 6px; padding-top: 6px; }
.resize { position: absolute; right: 2px; bottom: 3px; width: 9px; height: 9px; }

/* display settings */
.show { width: 289px; flex: none; margin-left: 4px; margin-bottom: 1px; display: flex; flex-direction: column; }
.stabs { display: flex; gap: 4px; padding: 3px 2px 0; height: 26px; border-bottom: 1px solid #c8cacd; align-items: flex-end; flex: none; }
.stabs button { height: 21px; padding: 0 6px; background: #dcdcdc; border-radius: 3px 3px 0 0; color: #444; }
.stabs .on { height: 24px; background: #fff; border: 1px solid #c8cacd; border-bottom-color: #fff; color: #1a73e8; margin-bottom: -1px; }
.tbox { flex: 1; min-height: 0; margin: 2px 2px 0; border: 1px solid #cfd1d4; overflow: hidden; position: relative; }
.show table { width: 269px; border-spacing: 0; border-collapse: separate; }
.show th, .show td { border: solid #dcdcdc; border-width: 0 1px 1px 0; height: 21px; overflow: hidden; }
.show th { height: 22px; }
.show .n { width: 143px; }
.show .k { width: 63px; text-align: center; }
.node { display: flex; align-items: center; height: 20px; }
.node svg { fill: none; stroke: #dcdcdc; height: 21px; }
.g1 { width: 12px; }
.g2 { width: 41px; }
.fold { width: 13px; height: 13px; border: 1px solid #888; border-radius: 2px; margin-right: 6px; background: linear-gradient(#444, #444) center / 5px 1px no-repeat #fff; }
.fold.first { margin-left: 2px; }
.k input { appearance: none; width: 14px; height: 14px; border: 1px solid #8a8a8a; border-radius: 2px; background: #fff; display: block; margin: 0 auto; position: relative; }
.k input:checked { background: #2279e5; border-color: #2279e5; }
.k input:checked::after { content: ""; position: absolute; left: 2px; top: 2px; width: 8px; height: 5px; border: solid #fff; border-width: 0 0 2px 2px; transform: rotate(-45deg); }
.k input:indeterminate { background: #8fc3ff; box-shadow: inset 0 0 0 1px #fff, inset 0 0 0 2px #3a8eee; }
.k input:disabled { background: #efefef; border-color: #b5b5b5; }
.tbox .bar { right: 4px; top: 12px; height: 155px; }
.sfoot { display: flex; justify-content: flex-end; padding: 7px 8px 6px; }
.sfoot .plain { width: 90px; }

/* status bar */
.status { height: 31px; display: flex; align-items: center; background: #fbfbfb; padding: 0 11px 0 2px; flex: none; }
.s1 { width: 90px; }
.s2 { width: 140px; }
.s3, .s4 { width: 110px; }
.snaps { display: flex; gap: 5px; margin-right: 14px; }
.snaps button { height: 24px; border: 1px solid #a8a8a8; border-radius: 3px; background: #fff; display: flex; align-items: center; justify-content: center; gap: 7px; }
.snaps .on { background: #d9e8fb; border-color: #3a84e6; }
.hint { margin-right: 3px; }
.done { width: 14px; height: 14px; margin-right: 6px; }

/* task bar */
.taskbar { height: 40px; flex: none; display: flex; align-items: center; border-top: 1px solid #16334d; background: linear-gradient(90deg, #1d6ea6 0, #3a9ad0 450px, #4aa6d8 640px, #3b8fcb 860px, #2a77bd 1000px, #4593cf 1180px, #2169b4 1290px, #1f64a8 1430px, #164a80 1510px, #123d6c 100%); }
.startzone { width: 75px; height: 39px; display: flex; align-items: center; padding-left: 9px; gap: 13px; background: #1f6493; }
.start svg { width: 36px; height: 36px; }
.tgrip { height: 32px; background-image: radial-gradient(circle, #0c2b47 1px, transparent 1px); }
.app-btn { width: 58px; height: 38px; margin: 0 3px 0 1px; border: 1px solid #bfe0f2; border-radius: 2px; background: linear-gradient(135deg, #8cc4e2, #4a9cc9 60%, #58b0da); display: flex; align-items: center; justify-content: center; box-shadow: 0 0 0 1px #1c4e74; }
.app-btn.on { background: linear-gradient(135deg, #e6f3fa, #a9d5ec); }
.app-btn svg { width: 32px; height: 32px; }
.tray { display: flex; align-items: center; color: #fff; height: 39px; }
.kb { width: 16px; height: 16px; margin-left: 15px; }
.q { width: 16px; height: 16px; margin: 0 9px 4px 6px; }
.tr { width: 9px; height: 18px; margin: 0 9px 4px 0; }
.ti { width: 16px; height: 16px; margin-right: 8px; }
.clock { width: 74px; display: flex; flex-direction: column; align-items: center; line-height: 18px; font-size: 12px; }
.play { width: 17px; height: 15px; margin: 0 11px 0 12px; }
.peek { width: 14px; height: 39px; border: 1px solid #6f8eac; background: linear-gradient(#4e7095, #1c3f66); }
</style>
